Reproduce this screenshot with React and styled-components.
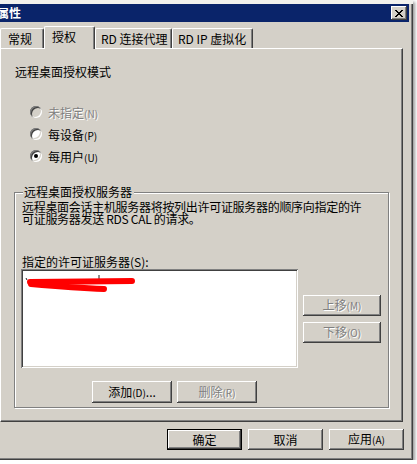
import React from "react";
import styled, { createGlobalStyle } from "styled-components";

const GlobalStyle = createGlobalStyle`
  body {
    margin: 0;
    background: #ffffff;
    font-family: "Noto Sans CJK SC", "DejaVu Sans", sans-serif;
    font-size: 12px;
    color: #000;
  }
`;

const raised = `
  box-shadow: inset -1px -1px #404040, inset 1px 1px #ffffff,
    inset -2px -2px #808080, inset 2px 2px #d4d0c8;
`;

const sunken = `
  box-shadow: inset 1px 1px #808080, inset -1px -1px #ffffff,
    inset 2px 2px #404040, inset -2px -2px #d4d0c8;
`;

const Window = styled.div`
  width: 413px;
  height: 460px;
  box-sizing: border-box;
  border-top: 4px solid #f2f1ed;
  background: #d4d0c8;
  display: flex;
  flex-direction: column;
  box-shadow: inset -1px -1px #404040, inset -2px -2px #808080,
    2px 2px 3px rgba(0, 0, 0, 0.4);
`;

const TitleBar = styled.div`
  height: 18px;
  margin-right: 4px;
  background: #0a246a;
  display: flex;
  align-items: center;
  justify-content: space-between;
`;

const Title = styled.span`
  margin-left: -3px;
  color: #fff;
  font-weight: bold;
  line-height: 18px;
`;

const CloseBtn = styled.div`
  width: 16px;
  height: 14px;
  margin-right: 2px;
  background: #d4d0c8;
  display: flex;
  align-items: center;
  justify-content: center;
  ${raised}
`;

const TabStrip = styled.div`
  margin-top: 4px;
  height: 22px;
  display: flex;
  align-items: flex-end;
  position: relative;
  z-index: 1;
`;

const Tab = styled.div`
  width: ${({ w }) => w}px;
  height: ${({ active }) => (active ? 23 : 20)}px;
  margin-bottom: ${({ active }) => (active ? -1 : 0)}px;
  box-sizing: border-box;
  padding-left: ${({ pad }) => pad}px;
  padding-top: 3px;
  line-height: 14px;
  white-space: nowrap;
  background: #d4d0c8;
  border-top: 1px solid #ffffff;
  border-left: 1px solid #ffffff;
  border-right: 1px solid #404040;
  border-radius: 2px 2px 0 0;
  box-shadow: inset -1px 0 #808080;
`;

const Panel = styled.div`
  width: 403px;
  height: 374px;
  box-sizing: border-box;
  padding: 17px 0 0 14px;
  border-top: 1px solid #ffffff;
  border-left: 1px solid #ffffff;
  border-right: 1px solid #404040;
  border-bottom: 1px solid #404040;
  box-shadow: inset -1px -1px #808080;
`;

const Heading = styled.div`
  line-height: 12px;
`;

const RadioList = styled.div`
  margin-top: 23px;
  padding-left: 15px;
  display: flex;
  flex-direction: column;
`;

const RadioRow = styled.div`
  height: 22px;
  display: flex;
  align-items: center;
  gap: 6px;
  color: ${({ disabled }) => (disabled ? "#808080" : "#000")};
  text-shadow: ${({ disabled }) => (disabled ? "1px 1px 0 #fff" : "none")};
`;

const RadioDot = styled.span`
  width: 12px;
  height: 12px;
  border-radius: 50%;
  box-sizing: border-box;
  background: ${({ disabled }) => (disabled ? "#d4d0c8" : "#fff")};
  box-shadow: inset 1px 1px #808080, inset -1px -1px #ffffff,
    inset 2px 2px #404040, inset -2px -2px #d4d0c8;
  display: flex;
  align-items: center;
  justify-content: center;

  &::after {
    content: "";
    width: 4px;
    height: 4px;
    border-radius: 50%;
    background: ${({ checked }) => (checked ? "#000" : "transparent")};
  }
`;

const Small = styled.span`
  font-size: 10px;
`;

const GroupBox = styled.div`
  margin: 25px 0 0 -1px;
  width: 375px;
  height: 216px;
  box-sizing: border-box;
  padding: 0 0 0 7px;
  border: 1px solid #808080;
  box-shadow: inset 1px 1px #ffffff, 1px 1px #ffffff;
`;

const Legend = styled.div`
  margin: -7px 0 0 1px;
  width: max-content;
  padding: 0 2px 0 1px;
  background: #d4d0c8;
  line-height: 12px;
`;

const Description = styled.div`
  margin-top: 3px;
  width: 350px;
  line-height: 12px;
  letter-spacing: -0.3px;
`;

const FieldLabel = styled.div`
  margin-top: 31px;
  line-height: 12px;
`;

const ListRow = styled.div`
  margin: 1px 0 0 -1px;
  display: flex;
  gap: 5px;
`;

const ListBox = styled.div`
  width: 277px;
  height: 99px;
  box-sizing: border-box;
  background: #fff;
  padding: 3px 0 0 3px;
  ${sunken}
`;

const SideButtons = styled.div`
  margin-top: 26px;
  display: flex;
  flex-direction: column;
  gap: 6px;
`;

const Button = styled.button`
  width: ${({ w }) => w || 75}px;
  height: ${({ h }) => h || 21}px;
  padding: 0;
  box-sizing: border-box;
  border: ${({ primary }) => (primary ? "1px solid #000" : "none")};
  background: #d4d0c8;
  font-family: inherit;
  font-size: 12px;
  line-height: 12px;
  color: ${({ disabled }) => (disabled ? "#808080" : "#000")};
  text-shadow: ${({ disabled }) => (disabled ? "1px 1px 0 #fff" : "none")};
  ${raised}
`;

const ActionRow = styled.div`
  margin: 13px 0 0 70px;
  display: flex;
  gap: 5px;
`;

const Footer = styled.div`
  margin-top: 7px;
  padding-right: 9px;
  display: flex;
  justify-content: flex-end;
  gap: 6px;
`;

const Redaction = () => (
  <svg width="120" height="24" viewBox="0 0 120 24">
    <path d="M2 6 L3 8" stroke="#222" strokeWidth="1" />
    <path d="M75 3 L75 7" stroke="#222" strokeWidth="1" />
    <path
      d="M6 10 C 30 10, 80 9, 108 9"
      stroke="#ff0000"
      strokeWidth="6"
      strokeLinecap="round"
      fill="none"
    />
    <path
      d="M7 12 C 30 14, 55 16, 80 17"
      stroke="#ff0000"
      strokeWidth="6"
      strokeLinecap="round"
      fill="none"
    />
  </svg>
);

export default function App() {
  return (
    <>
      <GlobalStyle />
      <Window>
        <TitleBar>
          <Title>属性</Title>
          <CloseBtn>
            <svg width="8" height="7" viewBox="0 0 8 7">
              <path d="M0 0 L7 7 M1 0 L8 7 M7 0 L0 7 M8 0 L1 7" stroke="#000" strokeWidth="1" />
            </svg>
          </CloseBtn>
        </TitleBar>

        <TabStrip>
          <Tab w={44} pad={7}>常规</Tab>
          <Tab w={51} pad={7} active>授权</Tab>
          <Tab w={77} pad={5}>RD 连接代理</Tab>
          <Tab w={81} pad={5}>RD IP 虚拟化</Tab>
        </TabStrip>

        <Panel>
          <Heading>远程桌面授权模式</Heading>
          <RadioList>
            <RadioRow disabled>
              <RadioDot disabled />
              <span>未指定<Small>(N)</Small></span>
            </RadioRow>
            <RadioRow>
              <RadioDot />
              <span>每设备<Small>(P)</Small></span>
            </RadioRow>
            <RadioRow>
              <RadioDot checked />
              <span>每用户<Small>(U)</Small></span>
            </RadioRow>
          </RadioList>

          <GroupBox>
            <Legend>远程桌面授权服务器</Legend>
            <Description>
              远程桌面会话主机服务器将按列出许可证服务器的顺序向指定的许可证服务器发送 RDS CAL 的请求。
            </Description>
            <FieldLabel>指定的许可证服务器(S):</FieldLabel>
            <ListRow>
              <ListBox>
                <Redaction />
              </ListBox>
              <SideButtons>
                <Button w={78} disabled>上移<Small>(M)</Small></Button>
                <Button w={78} disabled>下移<Small>(O)</Small></Button>
              </SideButtons>
            </ListRow>
            <ActionRow>
              <Button w={80} h={22}>添加<Small>(D)</Small>...</Button>
              <Button w={80} h={22} disabled>删除<Small>(R)</Small></Button>
            </ActionRow>
          </GroupBox>
        </Panel>

        <Footer>
          <Button primary>确定</Button>
          <Button>取消</Button>
          <Button>应用<Small>(A)</Small></Button>
        </Footer>
      </Window>
    </>
  );
}
